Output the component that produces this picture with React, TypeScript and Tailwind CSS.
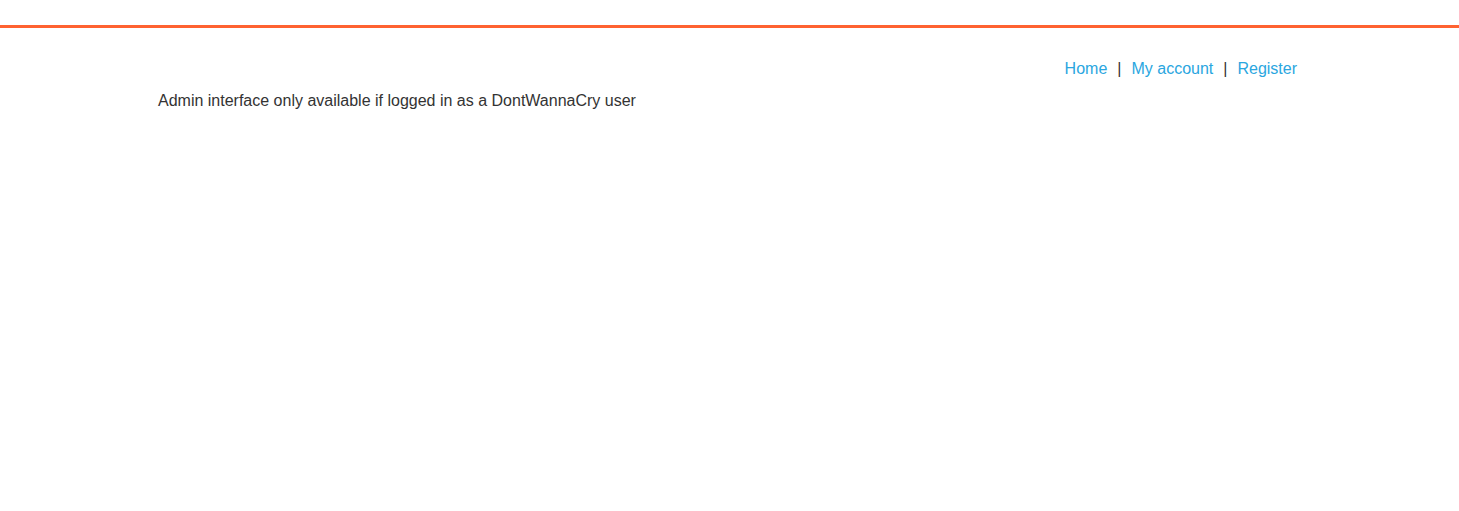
export default function App() {
  return (
    <div className="min-h-[511px] bg-white font-['Liberation_Sans',Arial,sans-serif] text-base leading-5 text-[#333]">
      <div className="h-[25px]" />
      <div className="border-t-[3px] border-[#ff6231]" />
      <div className="ml-[142px] w-[1170px] px-[15px] pt-[31px]">
        <div className="flex justify-end">
          <a href="#" className="text-[#2aa6e0]">Home</a>
          <span className="mx-[10px]">|</span>
          <a href="#" className="text-[#2aa6e0]">My account</a>
          <span className="mx-[10px]">|</span>
          <a href="#" className="text-[#2aa6e0]">Register</a>
        </div>
        <p className="mt-3 ml-px">Admin interface only available if logged in as a DontWannaCry user</p>
      </div>
    </div>
  );
}
